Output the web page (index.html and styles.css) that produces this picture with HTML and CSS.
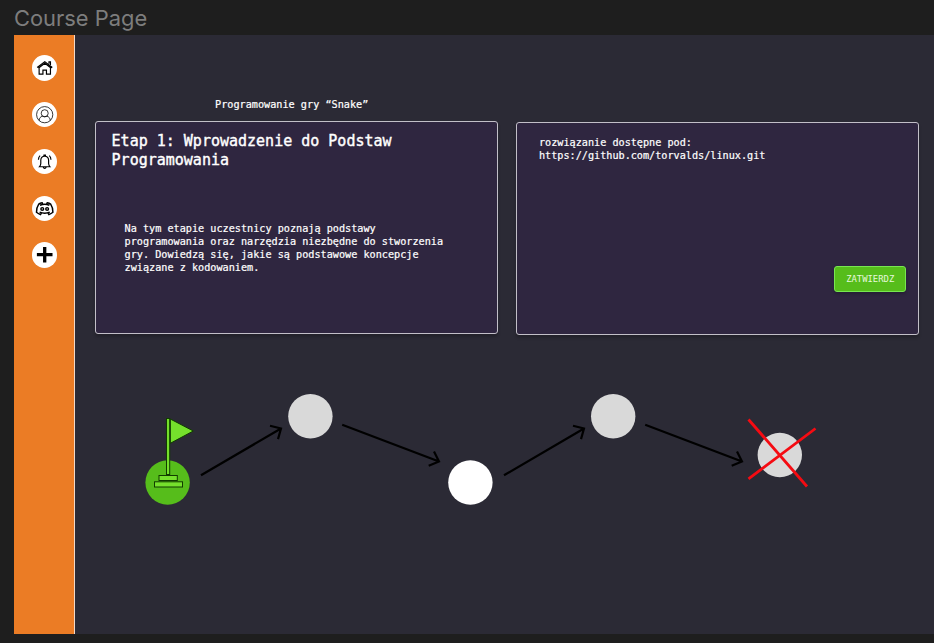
FILE: index.html
```html
<!DOCTYPE html>
<html lang="pl">
<head>
<meta charset="utf-8">
<title>Course Page</title>
<link rel="stylesheet" href="styles.css">
</head>
<body>
<div class="label">Course Page</div>
<div class="frame">
  <nav class="sidebar">
    <a class="nav"><svg viewBox="0 0 26 26"><path d="M5.3 12.8 13.1 6.8l7.7 6M6.500 13.500l6.600-5.100 6.700 5.100M7.3 13.500v6.100h3.900v-4.200h3.6v4.200h4.100V13.500M17.400 9V7h1.500v3.300"/></svg></a>
    <a class="nav"><svg class="thin" viewBox="0 0 26 26"><circle cx="13" cy="13" r="8.3"/><circle cx="13" cy="11.500" r="3.6"/><path d="M7.3 19c.2-2.700 1.300-3.800 3.400-4.500 1.500.8 3.100.8 4.600 0 2.100.7 3.200 1.800 3.400 4.500"/></svg></a>
    <a class="nav"><svg viewBox="0 0 26 26"><path d="M7.6 18.2h10.8c-.9-1-1.400-2-1.400-3.300v-3.300c0-2.400-1.500-4.200-4-4.200s-4 1.800-4 4.200v3.300c0 1.300-.5 2.300-1.400 3.300zM12.300 7.200v-1h1.400v1M11.500 18.600c.5 1.700 2.500 1.700 3 0M8.300 6.800c-1.200 1-1.700 2.500-1.700 4.200M17.700 6.800c1.200 1 1.700 2.500 1.700 4.200"/></svg></a>
    <a class="nav"><svg class="heavy" viewBox="0 0 26 26"><path d="m10.900 8-.5-1c-1.500.2-2.700.7-3.500 1.300-1.700 2.600-2.500 5.400-2.300 8.400 1.300 1.200 2.600 1.800 4.100 2.300l1-1.700M15.100 8l.5-1c1.500.2 2.700.7 3.500 1.300 1.700 2.600 2.500 5.400 2.300 8.400-1.300 1.200-2.600 1.800-4.100 2.300l-1-1.700M8.200 9.500c3.200-1.300 6.400-1.300 9.600 0M7.800 16.500c3.500 1.500 6.900 1.500 10.400 0"/><circle cx="10.500" cy="13.300" r="1.400"/><circle cx="15.500" cy="13.300" r="1.400"/></svg></a>
    <a class="nav"><svg class="plus" viewBox="0 0 26 26"><path d="M13 5v16M5 13h16"/></svg></a>
  </nav>
  <main class="content">
    <h1 class="course">Programowanie gry “Snake”</h1>
    <div class="cards">
      <section class="card stage">
        <h2>Etap 1: Wprowadzenie do Podstaw<br>Programowania</h2>
        <p>Na tym etapie uczestnicy poznają podstawy<br>programowania oraz narzędzia niezbędne do stworzenia<br>gry. Dowiedzą się, jakie są podstawowe koncepcje<br>związane z kodowaniem.</p>
      </section>
      <section class="card solution">
        <p>rozwiązanie dostępne pod:<br>https://github.com/torvalds/linux.git</p>
        <button class="submit">ZATWIERDZ</button>
      </section>
    </div>
    <svg class="map" viewBox="75 384 859 136">
      <circle class="done" cx="167.600" cy="482.500" r="22.200"/>
      <g class="flag">
        <path d="M170.300 419v24.300l23-12.300z"/>
        <rect x="166.500" y="418.500" width="3.200" height="56"/>
        <rect x="159" y="475.500" width="18.300" height="5"/>
        <rect x="154.500" y="481.800" width="28" height="5.200"/>
      </g>
      <circle class="todo" cx="310.400" cy="416.200" r="22.200"/>
      <circle class="current" cx="470.400" cy="482.500" r="22.200"/>
      <circle class="todo" cx="613.200" cy="416.200" r="22.200"/>
      <circle class="todo" cx="779.800" cy="455" r="22.200"/>
      <g class="arrow">
        <path d="M201 475.300 281 428.500M270 425.700l11 2.800-3 10.600"/>
        <path d="M342.200 424.800 439 461.500M434 451.500l5 10-10.300 4.300"/>
        <path d="M504 475.300 584 428.500M573 425.700l11 2.800-3 10.600"/>
        <path d="M645.200 424.800 742 461.500M737 451.500l5 10-10.300 4.300"/>
      </g>
      <path class="cross" d="M748.500 419.500 807 486.500M748.500 478.800 815.500 428.500"/>
    </svg>
  </main>
</div>
</body>
</html>
```

FILE: styles.css
```css
* { box-sizing: border-box; }

body {
  margin: 0;
  height: 643px;
  overflow: hidden;
  background: #1e1e1e;
  font-family: "DejaVu Sans Mono", monospace;
  color: #fff;
}

.label {
  height: 35px;
  padding: 5px 0 0 14px;
  font: 21.900px/27px Inter, sans-serif;
  color: #7d7d7d;
}

.frame {
  display: flex;
  height: 599px;
  margin-left: 14px;
  background: #2b2a35;
}

.sidebar {
  display: flex;
  flex-direction: column;
  align-items: center;
  gap: 21.400px;
  width: 61px;
  padding: 20.300px 0 0 1px;
  background: #eb7c25;
  border-right: 1px solid #f3d9c6;
}

.nav {
  width: 25.400px;
  height: 25.400px;
  border-radius: 50%;
  background: #fff;
}

.nav svg {
  display: block;
  width: 100%;
  height: 100%;
  fill: none;
  stroke: #000;
  stroke-width: 1.200;
}

.nav .thin { stroke-width: 0.800; }
.nav .heavy { stroke-width: 1.500; }
.nav .plus { stroke-width: 3.400; }

.content {
  flex: 1;
  padding-top: 63px;
}

.course {
  margin: 0 0 9px 140px;
  font-size: 10.200px;
  line-height: 14px;
  font-weight: 400;
  -webkit-text-stroke: 0.200px #fff;
}

.cards {
  display: flex;
  gap: 18px;
  padding-left: 19.600px;
}

.card {
  width: 403.300px;
  height: 213px;
  background: #2f2640;
  border: 1px solid #c2bfc8;
  border-radius: 3px;
  box-shadow: 0 3px 3px rgba(0, 0, 0, 0.200);
}

.card h2 {
  margin: 0;
  font-size: 15px;
  line-height: 19px;
  font-weight: 400;
  -webkit-text-stroke: 0.400px #fff;
}

.card p {
  margin: 0;
  font-size: 10.190px;
  line-height: 13px;
  -webkit-text-stroke: 0.200px #fff;
}

.stage { padding: 10px 0 0 16px; }
.stage p { margin: 52px 0 0 13px; }

.solution {
  display: flex;
  flex-direction: column;
  margin-top: 1px;
  padding: 13px 12px 0 22px;
}

.submit {
  align-self: flex-end;
  width: 72px;
  height: 26px;
  margin-top: 104px;
  padding: 1px 0 0;
  font: 8.900px/13px "DejaVu Sans Mono", monospace;
  color: #e5f8dc;
  background: #56bd1b;
  border: 1px solid #78e750;
  border-radius: 3px;
  box-shadow: 0 2px 3px rgba(0, 0, 0, 0.200);
}

.map {
  display: block;
  width: 859px;
  height: 136px;
  margin-top: 49px;
}

.done { fill: #56bd1b; }
.todo { fill: #d9d9d9; }
.current { fill: #fff; }

.flag {
  fill: #75e02c;
  stroke: #113c00;
  stroke-width: 1;
}

.arrow {
  fill: none;
  stroke: #000;
  stroke-width: 2.200;
}

.cross {
  fill: none;
  stroke: #f50b12;
  stroke-width: 2.800;
}
```
